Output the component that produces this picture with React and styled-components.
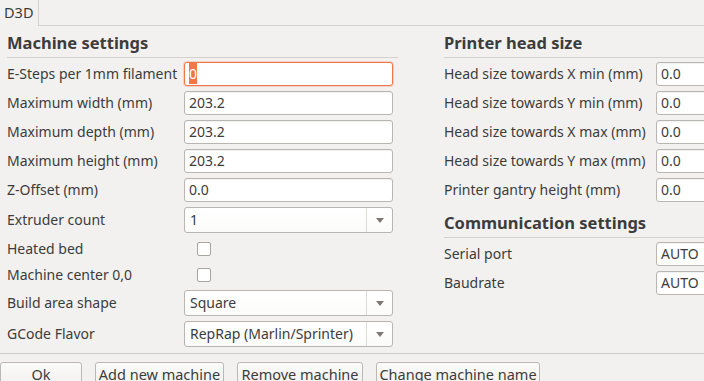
import React from 'react';
import styled, { createGlobalStyle } from 'styled-components';

const bg = '#f2f1f0';
const ink = '#3c3c3c';
const line = '#d4d0cb';
const fieldBorder = '#b9b5b0';
const accent = '#f07746';

const GlobalStyle = createGlobalStyle`
  html, body {
    margin: 0;
    padding: 0;
    background: ${bg};
    overflow: hidden;
  }
  body {
    font-family: 'Noto Sans', 'DejaVu Sans', sans-serif;
    font-size: 14px;
    color: ${ink};
  }
`;

const Window = styled.div`
  width: 704px;
  height: 381px;
  display: flex;
  flex-direction: column;
  overflow: hidden;
`;

const TabBar = styled.div`
  display: flex;
  height: 26px;
  flex: none;
`;

const Tab = styled.div`
  width: 39px;
  box-sizing: border-box;
  padding-left: 4px;
  line-height: 24px;
  font-size: 14.5px;
  border-right: 1px solid ${line};
`;

const TabRest = styled.div`
  flex: 1;
  border-bottom: 1px solid ${line};
`;

const Panel = styled.div`
  display: flex;
  gap: 46px;
  padding: 5px 0 6px 7px;
  flex: none;
`;

const Column = styled.div`
  display: grid;
  grid-template-columns: ${(p) => p.labelWidth}px ${(p) => p.fieldWidth}px;
  grid-auto-rows: min-content;
  row-gap: 5px;
  align-items: center;
  width: ${(p) => p.width}px;
  flex: none;
`;

const Heading = styled.div`
  grid-column: 1 / -1;
  font-weight: bold;
  font-size: 16.5px;
  height: ${(p) => p.height}px;
  display: flex;
  align-items: flex-end;
  padding-bottom: 3px;
  box-sizing: border-box;
  border-bottom: 1px solid ${line};
  margin-bottom: -1px;
  margin-right: ${(p) => p.trim || 0}px;
  white-space: nowrap;
`;

const Label = styled.div`
  white-space: nowrap;
  height: ${(p) => p.height || 24}px;
  line-height: ${(p) => p.height || 24}px;
`;

const Field = styled.div`
  height: 24px;
  box-sizing: border-box;
  border: 1px solid ${(p) => (p.focused ? accent : fieldBorder)};
  border-radius: 3px;
  background: #fff;
  padding-left: 4px;
  line-height: 22px;
  box-shadow: ${(p) => (p.focused ? `0 0 0 1px rgba(240,119,70,0.25)` : 'inset 0 1px 1px rgba(0,0,0,0.06)')};
  white-space: nowrap;
  overflow: hidden;
`;

const Selection = styled.span`
  background: ${accent};
  color: #fff;
  padding: 1px 0;
`;

const Select = styled.div`
  height: 26px;
  box-sizing: border-box;
  border: 1px solid ${fieldBorder};
  border-radius: 3px;
  background: linear-gradient(#ffffff, #fbfbfa);
  display: flex;
  align-items: center;
  white-space: nowrap;
`;

const SelectValue = styled.div`
  flex: 1;
  padding-left: 5px;
  height: 100%;
  line-height: 24px;
  border-right: 1px solid #dedbd7;
`;

const SelectArrow = styled.div`
  width: 25px;
  display: flex;
  justify-content: center;
  align-items: center;
`;

const CheckCell = styled.div`
  height: 21px;
  display: flex;
  align-items: center;
  padding-left: 13px;
`;

const CheckBox = styled.div`
  width: 14px;
  height: 14px;
  box-sizing: border-box;
  border: 1px solid #a9a5a0;
  border-radius: 2px;
  background: #fff;
`;

const Footer = styled.div`
  border-top: 1px solid #cfcbc6;
  display: flex;
  gap: 13px;
  padding-top: 8px;
  flex: none;
`;

const Button = styled.div`
  width: ${(p) => p.width}px;
  height: 28px;
  box-sizing: border-box;
  border: 1px solid #bbb7b2;
  border-radius: 3px;
  background: linear-gradient(#fbfbfa, #f0efee);
  text-align: center;
  line-height: 22px;
  font-size: 14.5px;
  white-space: nowrap;
`;

function Arrow() {
  return (
    <SelectArrow>
      <svg width="8" height="5" viewBox="0 0 8 5">
        <path d="M0 0 H8 L4 5 Z" fill="#7d7a76" />
      </svg>
    </SelectArrow>
  );
}

function Row({ label, value, focused }) {
  return (
    <>
      <Label>{label}</Label>
      <Field focused={focused}>{focused ? <Selection>{value}</Selection> : value}</Field>
    </>
  );
}

function SelectRow({ label, value }) {
  return (
    <>
      <Label height={26}>{label}</Label>
      <Select>
        <SelectValue>{value}</SelectValue>
        <Arrow />
      </Select>
    </>
  );
}

function CheckRow({ label }) {
  return (
    <>
      <Label height={21}>{label}</Label>
      <CheckCell>
        <CheckBox />
      </CheckCell>
    </>
  );
}

const headRows = [
  'Head size towards X min (mm)',
  'Head size towards Y min (mm)',
  'Head size towards X max (mm)',
  'Head size towards Y max (mm)',
  'Printer gantry height (mm)',
];

export default function App() {
  return (
    <Window>
      <GlobalStyle />
      <TabBar>
        <Tab>D3D</Tab>
        <TabRest />
      </TabBar>
      <Panel>
        <Column labelWidth={177} fieldWidth={209} width={391}>
          <Heading height={27} trim={-5}>Machine settings</Heading>
          <Row label="E-Steps per 1mm filament" value="0" focused />
          <Row label="Maximum width (mm)" value="203.2" />
          <Row label="Maximum depth (mm)" value="203.2" />
          <Row label="Maximum height (mm)" value="203.2" />
          <Row label="Z-Offset (mm)" value="0.0" />
          <SelectRow label="Extruder count" value="1" />
          <CheckRow label="Heated bed" />
          <CheckRow label="Machine center 0,0" />
          <SelectRow label="Build area shape" value="Square" />
          <SelectRow label="GCode Flavor" value="RepRap (Marlin/Sprinter)" />
        </Column>
        <Column labelWidth={212} fieldWidth={80} width={260}>
          <Heading height={27}>Printer head size</Heading>
          {headRows.map((h) => (
            <Row key={h} label={h} value="0.0" />
          ))}
          <Heading height={31}>Communication settings</Heading>
          <Row label="Serial port" value="AUTO" />
          <Row label="Baudrate" value="AUTO" />
        </Column>
      </Panel>
      <Footer>
        <Button width={82}>Ok</Button>
        <Button width={129}>Add new machine</Button>
        <Button width={126}>Remove machine</Button>
        <Button width={164}>Change machine name</Button>
      </Footer>
    </Window>
  );
}
